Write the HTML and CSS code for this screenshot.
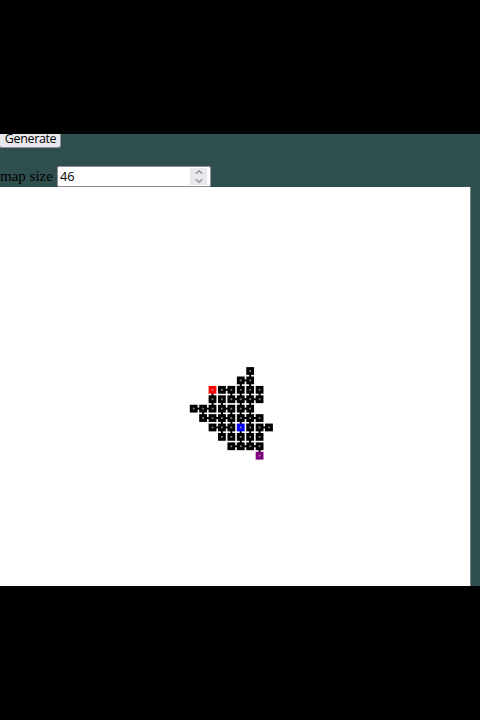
FILE: index.html
```html
<!DOCTYPE html>
<html lang="en">
<head>
<meta charset="utf-8">
<title>Map generator</title>
<link rel="stylesheet" href="styles.css">
</head>
<body>
<main class="page">
<div class="toolbar"><button class="generate">Generate</button></div>
<div class="settings">
<label class="label" for="size">map size</label>
<div class="field"><input id="size" class="size" type="text" value="46"><span class="spinner"><svg width="10" height="15" viewBox="0 0 10 15"><path d="M1.8 4.8 5 1.8 8.2 4.8M1.8 10.2 5 13.2 8.2 10.2"/></svg></span></div>
</div>
<div class="board"><svg id="map" class="map" width="470" height="399" viewBox="0 187 470 399"></svg></div>
</main>
<script src="map.js"></script>
</body>
</html>
```
FILE: styles.css
```css
body { margin: 0; background: #000; }
.page { height: 452px; margin-top: 134px; background: #2f4f4f; overflow: hidden; }
.toolbar { display: flex; align-items: flex-start; height: 32px; }
.generate { box-sizing: border-box; width: 62px; height: 14px; margin: 0 0 0 -1px; padding: 0 0 3px 1px; border: 1px solid #8f8f9d; border-top: 0; border-radius: 0 0 3px 3px; background: #e9e9ed; color: #000; font: 12.5px/10px "Open Sans", sans-serif; letter-spacing: -0.35px; }
.settings { display: flex; height: 21px; }
.label { width: 57px; font: 15px/21px "Liberation Serif", serif; color: #000; white-space: nowrap; }
.field { display: flex; box-sizing: border-box; width: 154px; height: 21px; border: 1px solid #8f8f9d; border-radius: 2px; background: #fff; }
.size { flex: 1; min-width: 0; padding: 0 0 0 2px; border: 0; outline: 0; background: transparent; font: 12.8px/19px "Open Sans", sans-serif; }
.spinner { display: flex; align-items: center; justify-content: center; width: 17px; margin: 1px 3px 1px 0; background: #e9e9ed; }
.spinner path { fill: none; stroke: #8f8f9d; stroke-width: 1.4; }
.board { width: 470px; height: 399px; background: #fff; border-right: 1px solid #6f8585; }
.map { display: block; }
```
FILE: map.js
```js
const pitch = 9.41;
const left = 193.7;
const top0 = 371;
// first column, then one mark per room; "-" joins to the next room
const rooms = [[6, "o"], [5, "o-o"], [2, "r o-o o o o"], [2, "o o o-o-o-o"], [0, "o-o-o o-o o-o"],
  [1, "o-o-o-o o-o-o"], [2, "o-o-o b o o-o"], [3, "o o o o o"], [4, "o-o-o-o"], [7, "p"]];
// columns joined to the row below
const down = [[6], [5, 6], [2, 4, 5, 6, 7], [2, 3, 5, 6], [1, 3, 4, 5, 6], [3, 4, 5, 6], [3, 4, 5, 6, 7], [5, 6], [7], []];
const colors = { o: "#000", r: "#f00", b: "#00f", p: "#800080" };
let out = "";
rooms.forEach(([first, text], row) => {
  const y = top0 + row * pitch;
  for (const col of down[row]) out += `<rect x="${left + col * pitch - 1}" y="${y + 3}" width="2" height="4"/>`;
  for (let i = 0; i < text.length; i++) {
    const x = left + (first + i / 2) * pitch;
    if (text[i] === "-") out += `<rect x="${x - 1.5}" y="${y - 1}" width="3" height="2"/>`;
    else if (text[i] !== " ") {
      out += `<rect x="${x - 3.9}" y="${y - 3.9}" width="7.8" height="7.8" fill="${colors[text[i]]}"/>`;
      out += `<rect x="${x - 0.9}" y="${y - 0.9}" width="1.8" height="1.8" fill="#aaa" fill-opacity="0.75"/>`;
    }
  }
});
document.getElementById("map").innerHTML = out;
```
